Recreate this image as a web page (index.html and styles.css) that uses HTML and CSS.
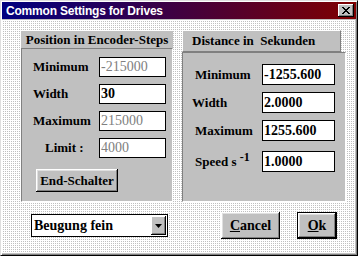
FILE: index.html
```html
<!DOCTYPE html>
<html lang="en">
<head>
  <meta charset="UTF-8" />
  <title>Common Settings for Drives</title>
  <link rel="stylesheet" href="styles.css">
</head>
<body>
  <div class="window">
    <div class="titlebar">
      <span class="title">Common Settings for Drives</span>
      <button class="close">
        <svg width="8" height="7" viewBox="0 0 8 7">
          <path d="M0 0 L7 7 M1 0 L8 7 M7 0 L0 7 M8 0 L1 7" stroke="#000" stroke-width="1" fill="none"/>
        </svg>
      </button>
    </div>

    <div class="client">
      <div class="groups">
        <section class="group group-left">
          <div class="group-head">Position in Encoder-Steps</div>
          <div class="panel">
            <div class="row">
              <label>Minimum</label>
              <input class="field off" type="text" value="-215000" disabled />
            </div>
            <div class="row">
              <label>Width</label>
              <input class="field" type="text" value="30" />
            </div>
            <div class="row">
              <label>Maximum</label>
              <input class="field off" type="text" value="215000" disabled />
            </div>
            <div class="row">
              <label class="limit">Limit :</label>
              <input class="field off" type="text" value="4000" disabled />
            </div>
            <button class="btn btn-end">End-Schalter</button>
          </div>
        </section>

        <section class="group group-right">
          <div class="group-head raised">Distance in&nbsp; Sekunden</div>
          <div class="panel">
            <div class="row">
              <label>Minimum</label>
              <input class="field" type="text" value="-1255.600" />
            </div>
            <div class="row">
              <label class="narrow">Width</label>
              <input class="field" type="text" value="2.0000" />
            </div>
            <div class="row">
              <label>Maximum</label>
              <input class="field" type="text" value="1255.600" />
            </div>
            <div class="row row-speed">
              <label>Speed s <sup>-1</sup></label>
              <input class="field" type="text" value="1.0000" />
            </div>
          </div>
        </section>
      </div>

      <div class="bottom">
        <div class="combo">
          <span class="combo-text">Beugung fein</span>
          <span class="combo-btn">
            <svg width="7" height="4" viewBox="0 0 7 4"><path d="M0 0 H7 L3.5 4 Z" fill="#000"/></svg>
          </span>
        </div>
        <button class="btn btn-cancel"><u>C</u>ancel</button>
        <button class="btn btn-ok"><u>O</u>k</button>
      </div>
    </div>
  </div>
</body>
</html>
```

FILE: styles.css
```css
body {
  margin: 0;
  background: #c0c0c0;
  font-family: "Liberation Serif", "Times New Roman", serif;
  color: #000;
}

.window {
  width: 358px;
  height: 256px;
  box-sizing: border-box;
  padding: 1px;
  background: #c0c0c0;
  border: 1px solid;
  border-color: #dfdfdf #000 #000 #dfdfdf;
  box-shadow: inset 1px 1px #fff, inset -1px -1px #808080;
  display: flex;
  flex-direction: column;
}

.titlebar {
  height: 17px;
  background: linear-gradient(to right, #000080, #800000);
  display: flex;
  align-items: center;
  justify-content: space-between;
  padding: 0 2px 0 4px;
}

.title {
  color: #fff;
  font-family: "Liberation Sans", Arial, sans-serif;
  font-weight: bold;
  font-size: 12px;
  letter-spacing: -0.2px;
}

.close {
  width: 16px;
  height: 13px;
  padding: 0;
  border: 0;
  background: #c0c0c0;
  box-shadow: inset -1px -1px #000, inset 1px 1px #fff, inset -2px -2px #808080;
  display: flex;
  align-items: center;
  justify-content: center;
}

.client {
  flex: 1;
  margin: 1px 1px 1px 0;
  padding: 10px 0 0 19px;
  background-color: #c0c0c0;
  background-image:
    linear-gradient(90deg, #fff 1px, transparent 1px),
    linear-gradient(#fff 1px, transparent 1px);
  background-size: 2px 2px;
}

.groups {
  display: flex;
  gap: 9px;
}

.group {
  height: 172px;
  display: flex;
  flex-direction: column;
}

.group-left {
  width: 152px;
}

.group-right {
  width: 164px;
}

.group-head {
  height: 18px;
  background: #c0c0c0;
  border-top: 1px solid #fff;
  font-weight: bold;
  font-size: 13px;
  line-height: 17px;
  text-align: center;
  box-sizing: border-box;
}

.group-head.raised {
  width: 159px;
  height: 22px;
  border: 1px solid;
  border-color: #fff #808080 #808080 #fff;
  text-align: left;
  padding-left: 9px;
  line-height: 20px;
}

.panel {
  flex: 1;
  background: #c0c0c0;
  border: 1px solid;
  border-color: #808080 #fff #fff #808080;
  display: flex;
  flex-direction: column;
  gap: 7px;
  padding-top: 8px;
}

.group-right .panel {
  padding-top: 11px;
}

.row {
  display: flex;
  align-items: center;
}

.row label {
  font-weight: bold;
  font-size: 13px;
  width: 66px;
  padding-left: 11px;
}

.row label.limit {
  width: 54px;
  padding-left: 23px;
}

.group-right .row label {
  width: 67px;
  padding-left: 12px;
}

.group-right .row label.narrow {
  width: 70px;
  padding-left: 9px;
}

.row-speed {
  margin-top: 3px;
}

.row sup {
  font-size: 12px;
  vertical-align: 5px;
  line-height: 0;
}

.field {
  width: 67px;
  height: 20px;
  box-sizing: border-box;
  border: 1px solid #000;
  background: #fff;
  padding: 0 1px;
  font-family: "Liberation Serif", "Times New Roman", serif;
  font-size: 14px;
  font-weight: bold;
  color: #000;
  outline: none;
}

.field.off {
  color: #808080;
  font-weight: normal;
}

.group-right .field {
  width: 73px;
  height: 21px;
}

.btn {
  background: #c0c0c0;
  border: 0;
  padding: 0;
  font-family: "Liberation Serif", "Times New Roman", serif;
  font-weight: bold;
  font-size: 13px;
  color: #000;
  box-shadow: inset -1px -1px #000, inset 1px 1px #fff, inset -2px -2px #808080, inset 2px 2px #dfdfdf;
}

.btn-end {
  width: 82px;
  height: 23px;
  margin: 4px 0 0 14px;
}

.bottom {
  display: flex;
  align-items: center;
  margin-top: 10px;
}

.combo {
  width: 137px;
  height: 23px;
  box-sizing: border-box;
  margin-left: 10px;
  border: 1px solid #000;
  background: #fff;
  display: flex;
  align-items: center;
  justify-content: space-between;
  padding: 0 1px 0 2px;
}

.combo-text {
  font-weight: bold;
  font-size: 14px;
}

.combo-btn {
  width: 15px;
  height: 19px;
  background: #c0c0c0;
  box-shadow: inset -1px -1px #000, inset 1px 1px #fff, inset -2px -2px #808080;
  display: flex;
  align-items: center;
  justify-content: center;
}

.btn-cancel {
  width: 59px;
  height: 27px;
  margin-left: 53px;
  font-size: 14px;
}

.btn-ok {
  width: 40px;
  height: 27px;
  margin-left: 17px;
  font-size: 14px;
  border: 1px solid #000;
}
```
